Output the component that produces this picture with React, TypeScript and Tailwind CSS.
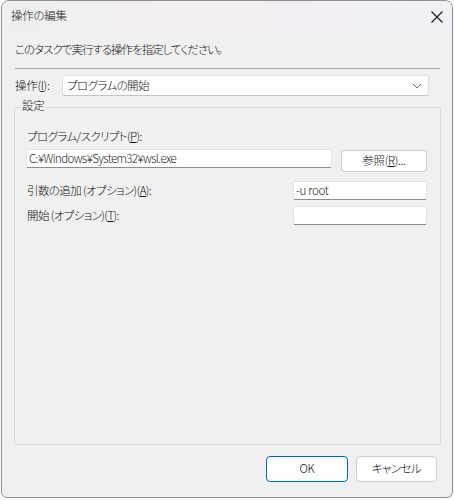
import React from "react";

const font = "[font-family:'Noto_Sans_CJK_JP','Noto_Sans',sans-serif] [font-feature-settings:'palt'] font-light tracking-[-0.3px]";

function Input({ value, className }: { value?: string; className: string }) {
  return (
    <div
      className={`h-[19px] bg-white border border-[#e3e3e3] border-b-[#8c8c8c] rounded-[2px] flex items-center px-[2px] text-[11.5px] leading-none text-[#1a1a1a] ${className}`}
    >
      {value}
    </div>
  );
}

export default function App() {
  return (
    <div className={`w-[454px] h-[500px] bg-[#fafafa] ${font}`}>
      <div className="ml-[1px] w-[452px] h-[498px] bg-[#f0f0f0] border border-[#8e8e8e] rounded-t-[8px] rounded-b-[6px] flex flex-col overflow-hidden text-[11.5px] text-[#111]">
        {/* Title bar */}
        <div className="h-[30px] shrink-0 flex items-center justify-between pl-[9px] pr-[8px] bg-[linear-gradient(90deg,#efefef_0%,#f5eff2_45%,#f4eef4_65%,#eff1f7_100%)]">
          <span className="leading-none text-[#1a1a1a]">操作の編集</span>
          <svg width="14" height="14" viewBox="0 0 14 14" className="mt-[1px]">
            <path d="M1.5 1.5 L12.5 12.5 M12.5 1.5 L1.5 12.5" stroke="#1a1a1a" strokeWidth="1.1" fill="none" />
          </svg>
        </div>

        <div className="pl-[12px] pr-[11px] flex flex-col">
          <div className="mt-[10px] h-[16px] leading-[16px] pl-[1px] tracking-[-1px]">このタスクで実行する操作を指定してください。</div>
          <div className="mt-[11px] h-px bg-[#a3a3a3] ml-[1px] mr-[1px]" />

          <div className="mt-[6px] flex items-center">
            <span className="w-[48px] pl-[1px] leading-none">
              操作(<span className="underline">I</span>):
            </span>
            <div className="w-[367px] h-[21px] bg-white border border-[#e0e0e0] border-b-[#c4c4c4] rounded-[3px] flex items-center justify-between pl-[4px] pr-[6px]">
              <span className="leading-none tracking-[-0.6px]">プログラムの開始</span>
              <svg width="10" height="6" viewBox="0 0 10 6">
                <path d="M1 1 L5 5 L9 1" stroke="#707070" strokeWidth="1" fill="none" />
              </svg>
            </div>
          </div>

          {/* Group box */}
          <div className="relative mt-[11px] h-[338px] border border-[#dadada] rounded-[2px] flex flex-col pl-[11px] pr-[13px]">
            <span className="absolute top-[-11px] left-[6px] px-[1px] bg-[#f0f0f0] leading-[16px]">設定</span>

            <div className="mt-[20px] h-[16px] leading-[16px] pl-[1px] tracking-[-0.6px]">
              プログラム/スクリプト(<span className="underline">P</span>):
            </div>
            <div className="mt-[5px] flex items-start">
              <Input value="C:¥Windows¥System32¥wsl.exe" className="w-[306px] tracking-[-0.6px]" />
              <div className="ml-[9px] mt-[1px] w-[86px] h-[22px] bg-[#fdfdfd] border border-[#d0d0d0] rounded-[4px] flex items-center justify-center leading-none">
                参照(<span className="underline">R</span>)...
              </div>
            </div>

            <div className="mt-[9px] flex items-center justify-between">
              <span className="pl-[1px] leading-none tracking-[-0.6px]">
                引数の追加 (オプション)(<span className="underline">A</span>):
              </span>
              <Input value="-u root" className="w-[134px]" />
            </div>
            <div className="mt-[6px] flex items-center justify-between">
              <span className="pl-[1px] leading-none tracking-[-0.6px]">
                開始 (オプション)(<span className="underline">T</span>):
              </span>
              <Input className="w-[134px]" />
            </div>
          </div>

          <div className="mt-[11px] flex justify-end gap-[8px] pr-[4px]">
            <div className="w-[82px] h-[26px] bg-[#fdfdfd] border border-[#0067c0] rounded-[4px] flex items-center justify-center leading-none">
              OK
            </div>
            <div className="w-[81px] h-[26px] bg-[#fdfdfd] border border-[#d0d0d0] rounded-[4px] flex items-center justify-center leading-none tracking-[-0.6px]">
              キャンセル
            </div>
          </div>
        </div>
      </div>
    </div>
  );
}
